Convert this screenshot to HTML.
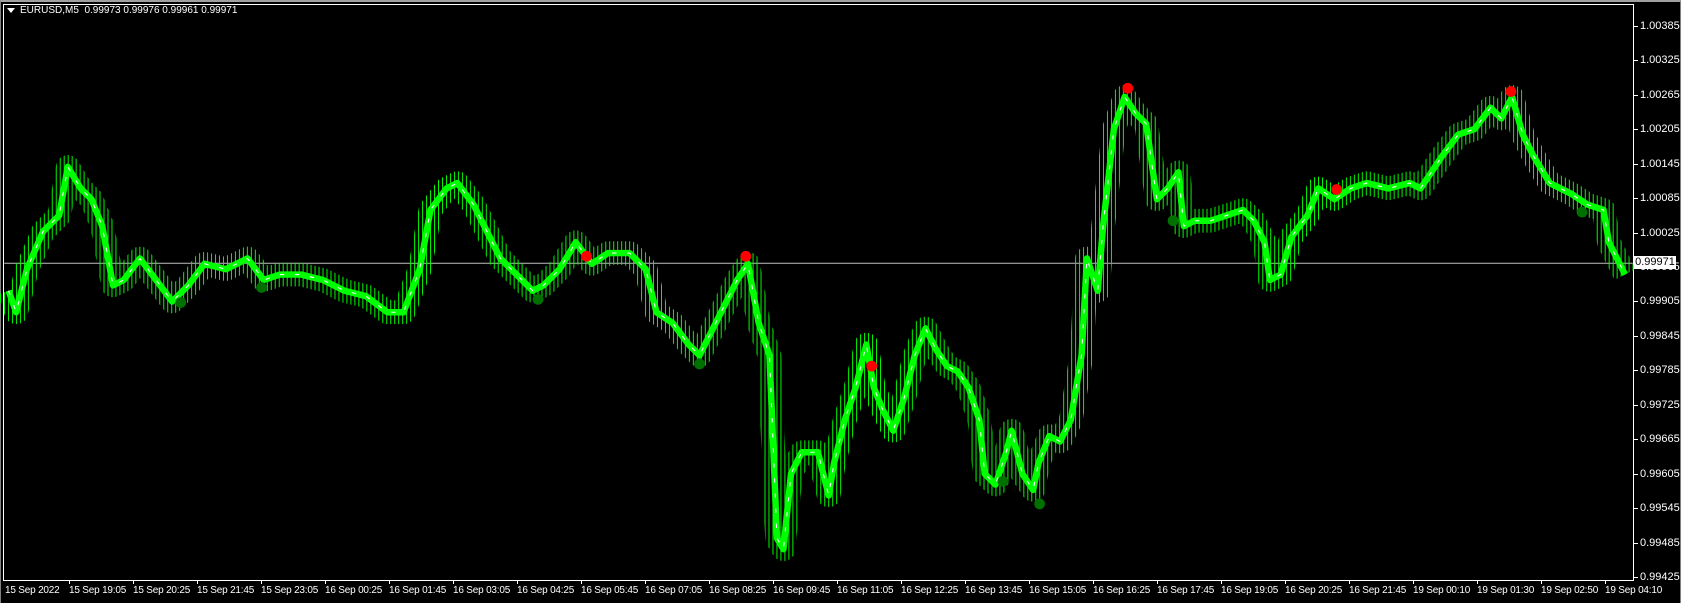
<!DOCTYPE html>
<html><head><meta charset="utf-8"><style>
html,body{margin:0;padding:0;background:#000;width:1681px;height:603px;overflow:hidden}
body{position:relative;font-family:"Liberation Sans",sans-serif;font-size:11px;color:#fff}
.frame{position:absolute;left:0;top:0;width:1679px;height:601px;border:1px solid #808080;border-top:2px solid #a0a0a0}
.chart{position:absolute;left:3px;top:4px;width:1629px;height:575px;border:1px solid #fff}
.p{position:absolute;left:1640px;font-size:11px;line-height:12px}
.pt{position:absolute;left:1634px;width:4px;height:1px;background:#fff}
.t{position:absolute;top:585px;font-size:10px;letter-spacing:-0.2px;white-space:nowrap}
.tt{position:absolute;top:580px;width:1px;height:4px;background:#fff}
</style></head><body>
<div class="frame"></div>
<div class="chart"></div>
<svg style="position:absolute;left:0;top:0" width="1681" height="603" viewBox="0 0 1562 560" preserveAspectRatio="none">
<defs>
<pattern id="st" width="3.7" height="4" patternUnits="userSpaceOnUse"><rect x="0" y="0" width="0.9" height="4" fill="#00ff00"/></pattern>
<polyline id="pth" fill="none" stroke-linejoin="round" points="8,270 15,290 25,250 40,215 55,200 63,155 75,175 85,185 95,210 105,265 115,260 130,240 145,260 160,280 175,265 190,245 210,250 230,240 245,260 260,255 280,255 300,260 320,270 340,275 360,290 375,290 390,250 400,195 415,175 425,170 440,190 455,220 465,240 480,255 495,270 505,265 520,250 535,225 550,245 565,235 585,235 600,250 610,290 625,300 640,320 650,330 660,310 670,290 685,260 695,245 705,300 715,330 722,500 728,510 735,440 745,420 760,420 770,460 775,430 785,390 795,360 805,320 812,360 820,380 830,400 840,370 850,330 860,305 870,325 880,340 890,345 900,360 910,390 915,440 925,450 935,420 940,400 950,440 960,455 965,430 975,405 985,410 995,390 1005,330 1010,240 1020,270 1025,210 1035,120 1045,90 1055,105 1065,115 1075,185 1085,175 1095,160 1100,210 1110,205 1125,205 1140,200 1155,195 1165,205 1175,225 1180,260 1190,255 1200,220 1215,200 1225,175 1240,185 1255,175 1270,170 1290,175 1310,170 1320,175 1340,145 1355,125 1370,120 1385,100 1395,110 1405,90 1415,125 1425,145 1440,170 1460,180 1475,190 1490,195 1495,225 1510,255"/>
</defs>
<line x1="4" y1="244.5" x2="1517" y2="244.5" stroke="#c0c0c0" stroke-width="0.9"/>
<use href="#pth" stroke="url(#st)" stroke-width="22"/>
<use href="#pth" stroke="#00ff00" stroke-width="6"/>
<use href="#pth" stroke="#ffffff" stroke-width="1" stroke-dasharray="4 10"/>
<g fill="#ff0000"><circle cx="545" cy="238" r="5"/><circle cx="693" cy="238" r="5"/><circle cx="810" cy="340" r="5"/><circle cx="1048" cy="82" r="5"/><circle cx="1242" cy="176" r="5"/><circle cx="1404" cy="85" r="5"/></g>
<g fill="#007000"><circle cx="168" cy="281" r="5"/><circle cx="243" cy="267" r="5"/><circle cx="500" cy="278" r="5"/><circle cx="650" cy="338" r="5"/><circle cx="932" cy="447" r="5"/><circle cx="966" cy="468" r="5"/><circle cx="1090" cy="205" r="5"/><circle cx="1470" cy="197" r="5"/></g>
</svg>
<div style="position:absolute;left:7px;top:8px;width:0;height:0;border-left:4px solid transparent;border-right:4px solid transparent;border-top:5px solid #fff"></div>
<div style="position:absolute;left:20px;top:5px;white-space:nowrap;line-height:12px;font-size:10px">EURUSD,M5&nbsp; 0.99973 0.99976 0.99961 0.99971</div>
<div class="pt" style="top:26px"></div><div class="p" style="top:20px">1.00385</div>
<div class="pt" style="top:60px"></div><div class="p" style="top:54px">1.00325</div>
<div class="pt" style="top:95px"></div><div class="p" style="top:89px">1.00265</div>
<div class="pt" style="top:129px"></div><div class="p" style="top:123px">1.00205</div>
<div class="pt" style="top:164px"></div><div class="p" style="top:158px">1.00145</div>
<div class="pt" style="top:198px"></div><div class="p" style="top:192px">1.00085</div>
<div class="pt" style="top:233px"></div><div class="p" style="top:227px">1.00025</div>
<div class="pt" style="top:267px"></div><div class="p" style="top:261px">0.99965</div>
<div class="pt" style="top:301px"></div><div class="p" style="top:295px">0.99905</div>
<div class="pt" style="top:336px"></div><div class="p" style="top:330px">0.99845</div>
<div class="pt" style="top:370px"></div><div class="p" style="top:364px">0.99785</div>
<div class="pt" style="top:405px"></div><div class="p" style="top:399px">0.99725</div>
<div class="pt" style="top:439px"></div><div class="p" style="top:433px">0.99665</div>
<div class="pt" style="top:474px"></div><div class="p" style="top:468px">0.99605</div>
<div class="pt" style="top:508px"></div><div class="p" style="top:502px">0.99545</div>
<div class="pt" style="top:543px"></div><div class="p" style="top:537px">0.99485</div>
<div class="pt" style="top:577px"></div><div class="p" style="top:571px">0.99425</div>
<div style="position:absolute;left:1634px;top:256px;width:42px;height:13px;background:#fff;color:#000;line-height:13px;text-align:center;font-size:11px">0.99971</div>
<div class="t" style="left:5px">15 Sep 2022</div>
<div class="tt" style="left:69px"></div><div class="t" style="left:69px">15 Sep 19:05</div>
<div class="tt" style="left:133px"></div><div class="t" style="left:133px">15 Sep 20:25</div>
<div class="tt" style="left:197px"></div><div class="t" style="left:197px">15 Sep 21:45</div>
<div class="tt" style="left:261px"></div><div class="t" style="left:261px">15 Sep 23:05</div>
<div class="tt" style="left:325px"></div><div class="t" style="left:325px">16 Sep 00:25</div>
<div class="tt" style="left:389px"></div><div class="t" style="left:389px">16 Sep 01:45</div>
<div class="tt" style="left:453px"></div><div class="t" style="left:453px">16 Sep 03:05</div>
<div class="tt" style="left:517px"></div><div class="t" style="left:517px">16 Sep 04:25</div>
<div class="tt" style="left:581px"></div><div class="t" style="left:581px">16 Sep 05:45</div>
<div class="tt" style="left:645px"></div><div class="t" style="left:645px">16 Sep 07:05</div>
<div class="tt" style="left:709px"></div><div class="t" style="left:709px">16 Sep 08:25</div>
<div class="tt" style="left:773px"></div><div class="t" style="left:773px">16 Sep 09:45</div>
<div class="tt" style="left:837px"></div><div class="t" style="left:837px">16 Sep 11:05</div>
<div class="tt" style="left:901px"></div><div class="t" style="left:901px">16 Sep 12:25</div>
<div class="tt" style="left:965px"></div><div class="t" style="left:965px">16 Sep 13:45</div>
<div class="tt" style="left:1029px"></div><div class="t" style="left:1029px">16 Sep 15:05</div>
<div class="tt" style="left:1093px"></div><div class="t" style="left:1093px">16 Sep 16:25</div>
<div class="tt" style="left:1157px"></div><div class="t" style="left:1157px">16 Sep 17:45</div>
<div class="tt" style="left:1221px"></div><div class="t" style="left:1221px">16 Sep 19:05</div>
<div class="tt" style="left:1285px"></div><div class="t" style="left:1285px">16 Sep 20:25</div>
<div class="tt" style="left:1349px"></div><div class="t" style="left:1349px">16 Sep 21:45</div>
<div class="tt" style="left:1413px"></div><div class="t" style="left:1413px">19 Sep 00:10</div>
<div class="tt" style="left:1477px"></div><div class="t" style="left:1477px">19 Sep 01:30</div>
<div class="tt" style="left:1541px"></div><div class="t" style="left:1541px">19 Sep 02:50</div>
<div class="tt" style="left:1605px"></div><div class="t" style="left:1605px">19 Sep 04:10</div>
</body></html>
